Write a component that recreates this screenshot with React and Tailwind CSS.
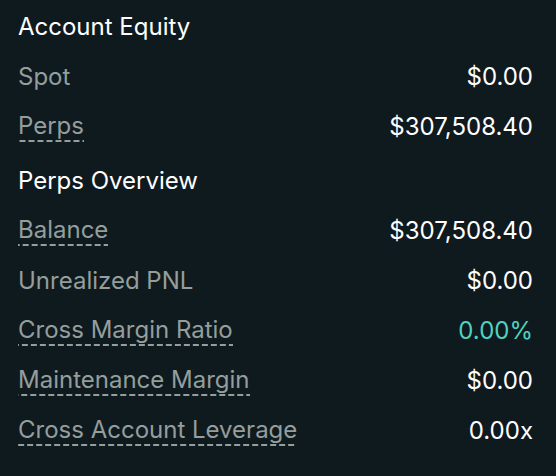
export default function App() {
  const equity = [
    { label: "Spot", value: "$0.00" },
    { label: "Perps", value: "$307,508.40", dashed: true },
  ];
  const overview = [
    { label: "Balance", value: "$307,508.40", dashed: true },
    { label: "Unrealized PNL", value: "$0.00" },
    { label: "Cross Margin Ratio", value: "0.00%", dashed: true, green: true },
    { label: "Maintenance Margin", value: "$0.00", dashed: true },
    { label: "Cross Account Leverage", value: "0.00x", dashed: true },
  ];

  const Row = ({ label, value, dashed, green }) => (
    <div className="h-[50px] flex items-center justify-between">
      <span
        className={
          dashed
            ? "text-[#949e9c] pb-[2px] bg-[linear-gradient(to_right,#949e9c_66%,transparent_0)] bg-[length:9px_2px] bg-repeat-x bg-bottom"
            : "text-[#949e9c]"
        }
      >
        {label}
      </span>
      <span className={green ? "text-[#50d2c1]" : "text-white"}>{value}</span>
    </div>
  );

  return (
    <div
      className="w-[556px] h-[476px] bg-[#0f1a1f] pl-[18px] pr-[23px] pt-[2px] text-[24px] leading-[28px]"
      style={{ fontFamily: "Inter, 'Noto Sans', sans-serif" }}
    >
      <div className="h-[50px] flex items-center text-white">Account Equity</div>
      {equity.map((r) => (
        <Row key={r.label} {...r} />
      ))}
      <div className="h-[50px] mt-[4px] flex items-center text-white">Perps Overview</div>
      {overview.map((r) => (
        <Row key={r.label} {...r} />
      ))}
    </div>
  );
}
